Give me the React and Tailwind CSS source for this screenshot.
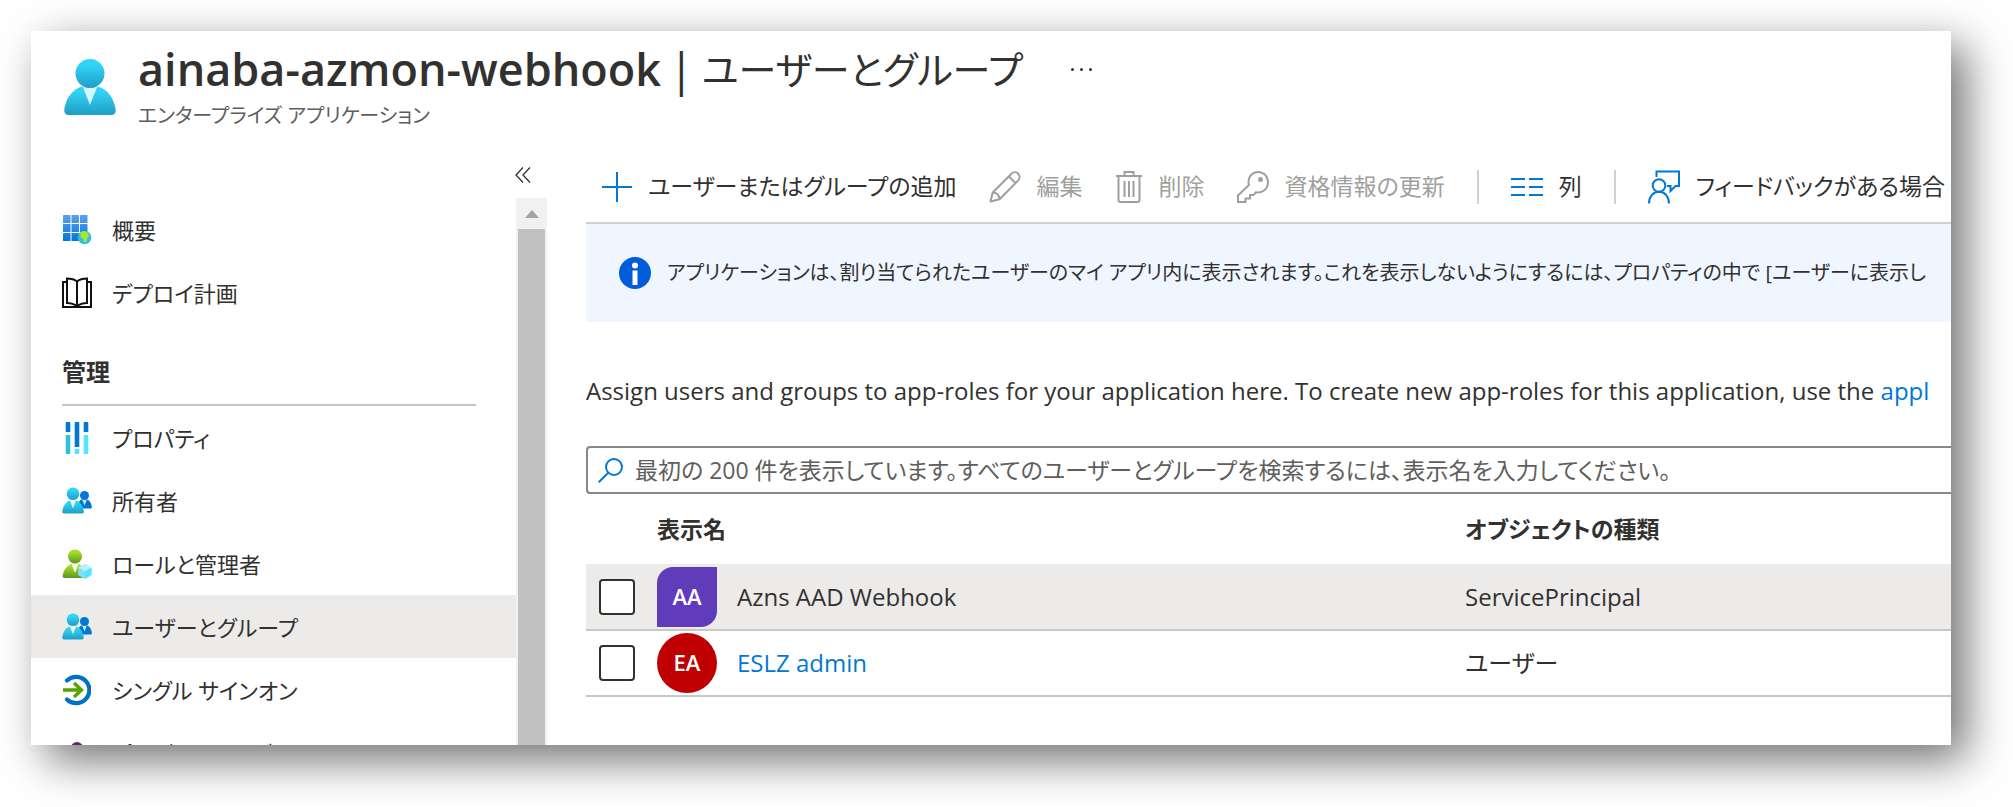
import React from "react";

function PersonIcon({ className }) {
  return (
    <svg viewBox="0 0 52 56" className={className} aria-hidden="true">
      <defs>
        <linearGradient id="person" x1="0" y1="0" x2="0" y2="1">
          <stop offset="0.2" stopColor="#32d4f5" />
          <stop offset="1" stopColor="#1f9dc6" />
        </linearGradient>
      </defs>
      <path d="M47.500 56a4.300 4.300 0 0 0 4.200-5C50 38 42 26.500 26 26.500S2 38 .3 51a4.300 4.300 0 0 0 4.200 5z" fill="url(#person)" />
      <path d="M18.500 27L26 46l7.500-19c-4 2.500-11 2.500-15 0z" fill="#fff" opacity=".8" />
      <circle cx="26" cy="14.500" r="14.500" fill="url(#person)" />
    </svg>
  );
}

function OverviewIcon() {
  return (
    <svg viewBox="0 0 28 30" className="h-[30px] w-7" aria-hidden="true">
      <defs>
        <linearGradient id="tiles" x1="0" y1="0" x2="0" y2="26" gradientUnits="userSpaceOnUse">
          <stop offset="0" stopColor="#5ea0ef" />
          <stop offset="1" stopColor="#0078d4" />
        </linearGradient>
      </defs>
      <g fill="url(#tiles)">
        {[0, 8.500, 17].map((x) =>
          [0, 9, 18].map((y) => <rect key={x + "-" + y} x={x} y={y} width="7.500" height="8" rx=".6" />)
        )}
      </g>
      <circle cx="21.500" cy="22.500" r="6.800" fill="#32bedd" />
      <path d="M17.500 17.500c2-1.500 5-1.800 7 .2l1.500 3-1.500 2-1 3.500-2.500 1.500-.5-3.500-3-2.500z" fill="#a7e82e" />
    </svg>
  );
}

function BookIcon() {
  return (
    <svg viewBox="0 0 30 32" className="h-8 w-[30px]" fill="none" stroke="#111" strokeWidth="2" aria-hidden="true">
      <path d="M5 5H1v25h28V5h-4" />
      <path d="M15 4.500C12 2 9 1.500 5 1.500V26c4 0 7 .8 10 3.500 3-2.700 6-3.500 10-3.500V1.500c-4 0-7 .5-10 3zM15 4.500v25" />
    </svg>
  );
}

function PropertiesIcon() {
  return (
    <svg viewBox="0 0 24 32" className="h-8 w-6" aria-hidden="true">
      <g fill="#0078d4">
        <path d="M1.500 0h3a.8.8 0 0 1 .8.800V10H.7V.8A.8.8 0 0 1 1.500 0zM10.500 0h3a.8.8 0 0 1 .8.800V25H9.700V.8a.8.800 0 0 1 .8-.8zM19.500 0h3a.8.8 0 0 1 .8.800V10h-4.600V.8a.8.800 0 0 1 .8-.8z" />
      </g>
      <path d="M.7 13h4.600v18a1 1 0 0 1-1 1H1.700a1 1 0 0 1-1-1z" fill="#32bedd" />
      <path d="M9.700 27h4.600v4a1 1 0 0 1-1 1h-2.600a1 1 0 0 1-1-1zM18.700 13h4.600v18a1 1 0 0 1-1 1h-2.600a1 1 0 0 1-1-1z" fill="#50e6ff" />
    </svg>
  );
}

function UsersIcon() {
  return (
    <svg viewBox="0 0 30 27" className="h-[27px] w-[30px]" aria-hidden="true">
      <path d="M28.500 21.500c1 0 1.500-.7 1.400-1.500-.5-4.500-3-8-7.400-8s-7 3.500-7.400 8l4 1.500z" fill="#0078d4" />
      <path d="M20 12l2.500 6.500L25 12z" fill="#fff" opacity=".85" />
      <circle cx="22.500" cy="8.500" r="4.500" fill="#0078d4" />
      <path d="M20 26.500c1.200 0 1.900-.9 1.800-1.900C21 18.500 17.500 13 11 13S1 18.500.2 24.600c-.1 1 .6 1.900 1.800 1.900z" fill="url(#person)" />
      <path d="M7.700 13l3.300 8.500 3.300-8.500z" fill="#fff" opacity=".85" />
      <circle cx="11" cy="6.800" r="6.300" fill="url(#person)" />
    </svg>
  );
}

function RolesIcon() {
  return (
    <svg viewBox="0 0 30 30" className="h-[30px] w-[30px]" aria-hidden="true">
      <defs>
        <linearGradient id="role" x1="0" y1="0" x2="0" y2="1">
          <stop offset="0.200" stopColor="#a4dc26" />
          <stop offset="1" stopColor="#5e9624" />
        </linearGradient>
      </defs>
      <path d="M23 29c1.200 0 2-1 1.900-2C24 20.500 20 14.500 13 14.500S1.500 20.500.6 27c-.1 1 .700 2 1.900 2z" fill="url(#role)" />
      <path d="M9.300 14.500L13 24l3.700-9.500z" fill="#fff" opacity=".9" />
      <circle cx="13" cy="7.500" r="7" fill="url(#role)" />
      <path d="M23 15l6.500 3.500v7.500L23 30l-6.500-4v-7.500z" fill="#9cebff" />
      <path d="M23 22l6.500-3.500v7.500L23 30z" fill="#50e6ff" />
      <path d="M16.500 18.500L23 22v8l-6.500-4z" fill="#7fdff5" />
      <path d="M23 22l-6.500-3.500L23 15l6.500 3.500z" fill="#b5f1ff" />
    </svg>
  );
}

function SignOnIcon() {
  return (
    <svg viewBox="0 0 28 32" className="h-8 w-7" fill="none" aria-hidden="true">
      <path d="M4 6.500A13.200 13.200 0 1 1 4 25.500" stroke="#0072c6" strokeWidth="4.200" strokeLinecap="round" />
      <path d="M0 16h18M11 9l7.500 7-7.500 7" stroke="#57a300" strokeWidth="3.400" />
    </svg>
  );
}

function ProvisionIcon() {
  return (
    <svg viewBox="0 0 28 32" className="h-8 w-7" fill="none" stroke="#68217a" strokeWidth="3" aria-hidden="true">
      <circle cx="14" cy="11" r="4.500" />
      <path d="M3 31c0-8 5-12 11-12s11 4 11 12" />
    </svg>
  );
}

const overviewItems = [
  { label: "概要", icon: <OverviewIcon /> },
  { label: "デプロイ計画", icon: <BookIcon /> },
];

const manageItems = [
  { label: "プロパティ", icon: <PropertiesIcon /> },
  { label: "所有者", icon: <UsersIcon /> },
  { label: "ロールと管理者", icon: <RolesIcon /> },
  { label: "ユーザーとグループ", icon: <UsersIcon />, current: true },
  { label: "シングル サインオン", icon: <SignOnIcon /> },
  { label: "プロビジョニング", icon: <ProvisionIcon /> },
];

function NavList({ items }) {
  return (
    <ul>
      {items.map((item) => (
        <li key={item.label}>
          <a
            href="#"
            aria-current={item.current ? "page" : undefined}
            className={
              item.current
                ? "flex h-[63px] items-center gap-5 bg-[#edebe9] pl-[31px]"
                : "flex h-[63px] items-center gap-5 pl-[31px]"
            }
          >
            <span className="flex w-[30px] shrink-0 justify-center">{item.icon}</span>
            <span className="text-[22px] leading-8 whitespace-nowrap">{item.label}</span>
          </a>
        </li>
      ))}
    </ul>
  );
}

function Sidebar() {
  return (
    <nav aria-label="メニュー" className="flex w-[516px] shrink-0 flex-col">
      <div className="flex h-[47px] items-center justify-end pr-4">
        <button type="button" aria-label="折りたたむ">
          <svg viewBox="0 0 16 16" className="size-4" fill="none" stroke="#323130" strokeWidth="1.300" aria-hidden="true">
            <path d="M8 .5L1 8l7 7.500M15 .5L8 8l7 7.500" />
          </svg>
        </button>
      </div>
      <div className="flex min-h-0 flex-1">
        <div className="min-w-0 flex-1 overflow-hidden">
          <NavList items={overviewItems} />
          <div className="mr-10 ml-[31px] flex h-[82px] items-center border-b-2 border-[#c8c6c4] pt-4">
            <h2 className="text-2xl font-semibold">管理</h2>
          </div>
          <NavList items={manageItems} />
        </div>
        <div className="flex w-[31px] flex-col bg-[#f1f1f1]">
          <div className="flex h-[31px] items-center justify-center">
            <svg viewBox="0 0 14 8" className="h-2 w-3.5" aria-hidden="true">
              <path d="M7 0l7 8H0z" fill="#a3a3a3" />
            </svg>
          </div>
          <div className="mx-0.5 flex-1 bg-[#c1c1c1]" />
        </div>
      </div>
    </nav>
  );
}

function Command({ icon, label, disabled }) {
  return (
    <button
      type="button"
      disabled={disabled}
      className="flex items-center gap-4 text-[23px] whitespace-nowrap disabled:text-[#a19f9d]"
    >
      {icon}
      {label}
    </button>
  );
}

function Toolbar() {
  return (
    <div className="flex h-[73px] shrink-0 items-center gap-8 overflow-hidden border-b-2 border-[#d2d0ce] pl-4">
      <Command
        label="ユーザーまたはグループの追加"
        icon={
          <svg viewBox="0 0 30 30" className="size-[30px]" stroke="#0078d4" strokeWidth="2" aria-hidden="true">
            <path d="M15 0v30M0 15h30" />
          </svg>
        }
      />
      <Command
        disabled
        label="編集"
        icon={
          <svg viewBox="0 0 32 32" className="size-8" fill="none" stroke="#a19f9d" strokeWidth="2" strokeLinejoin="round" aria-hidden="true">
            <path d="M1.500 30.500l2.200-9L22.500 2.700a4.700 4.700 0 0 1 6.700 6.700L10.500 28.200zM20 5.500l6.500 6.500M3.700 21.500c3.500-.2 6.700 2.500 6.800 6.700" />
          </svg>
        }
      />
      <Command
        disabled
        label="削除"
        icon={
          <svg viewBox="0 0 28 32" className="h-8 w-7" fill="none" stroke="#a19f9d" strokeWidth="2" aria-hidden="true">
            <path d="M1 5h26M9.500 5V1h9v4M3.500 5v24a2 2 0 0 0 2 2h17a2 2 0 0 0 2-2V5M9.500 10v16M14 10v16M18.500 10v16" />
          </svg>
        }
      />
      <Command
        disabled
        label="資格情報の更新"
        icon={
          <svg viewBox="0 0 32 32" className="size-8" fill="none" stroke="#a19f9d" strokeWidth="2" aria-hidden="true">
            <path d="M1 31v-6.500L12 14C10 7 14.500 1 21.500 1A9.700 9.700 0 0 1 31 11c0 7-5.500 11.500-12 10.200L16.500 24H13v3.500H8.500V31z" />
            <circle cx="23.500" cy="8.500" r="1.500" fill="#a19f9d" />
          </svg>
        }
      />
      <div className="h-[34px] w-0.5 shrink-0 bg-[#d2d0ce]" />
      <Command
        label="列"
        icon={
          <svg viewBox="0 0 32 20" className="h-5 w-8" stroke="#0078d4" strokeWidth="2" aria-hidden="true">
            <path d="M0 2h14M18 2h14M0 10h14M18 10h14M0 18h14M18 18h14" />
          </svg>
        }
      />
      <div className="h-[34px] w-0.5 shrink-0 bg-[#d2d0ce]" />
      <Command
        label="フィードバックがある場合"
        icon={
          <svg viewBox="0 0 32 34" className="h-[34px] w-8" fill="none" stroke="#0078d4" strokeWidth="2" aria-hidden="true">
            <path d="M8.500 7V1.500H31V16h-3.500l-5 5v-5H19" />
            <circle cx="11" cy="15.500" r="6.300" />
            <path d="M1 33.500c0-7 4-11.700 10-11.700s10 4.700 10 11.700" />
          </svg>
        }
      />
    </div>
  );
}

const rows = [
  { initials: "AA", name: "Azns AAD Webhook", type: "ServicePrincipal", app: true },
  { initials: "EA", name: "ESLZ admin", type: "ユーザー" },
];

function AssignmentTable() {
  return (
    <table className="w-full table-fixed text-left text-2xl">
      <colgroup>
        <col className="w-[71px]" />
        <col className="w-[808px]" />
        <col />
      </colgroup>
      <thead>
        <tr className="h-[70px] text-[23px]">
          <td />
          <th scope="col" className="font-semibold">表示名</th>
          <th scope="col" className="font-semibold">オブジェクトの種類</th>
        </tr>
      </thead>
      <tbody>
        {rows.map((row) => (
          <tr
            key={row.name}
            className={
              row.app
                ? "h-[66px] border-b-2 border-[#c8c8c8] bg-[#edebe9]"
                : "h-[66px] border-b-2 border-[#c8c8c8]"
            }
          >
            <td className="pl-[13px]">
              <input
                type="checkbox"
                aria-label={row.name}
                className="block size-9 appearance-none rounded-sm border-2 border-[#323130] bg-white"
              />
            </td>
            <td>
              <div className="flex items-center gap-5">
                <span
                  className={
                    row.app
                      ? "flex size-[60px] items-center justify-center rounded-tl-2xl rounded-br-2xl bg-[#603cba] text-[22px] font-semibold text-white"
                      : "flex size-[60px] items-center justify-center rounded-full bg-[#c00000] text-[22px] font-semibold text-white"
                  }
                >
                  {row.initials}
                </span>
                {row.app ? <span>{row.name}</span> : <a href="#" className="text-[#0078d4]">{row.name}</a>}
              </div>
            </td>
            <td>{row.type}</td>
          </tr>
        ))}
      </tbody>
    </table>
  );
}

export default function App() {
  return (
    <div className="h-screen bg-white pt-[31px] pr-[62px] pb-[62px] pl-[31px] font-['Open_Sans','Noto_Sans_CJK_JP',sans-serif] text-[#323130] [font-feature-settings:'palt']">
      <div className="flex h-full flex-col overflow-hidden bg-white shadow-[15px_15px_42px_rgba(0,0,0,0.56)]">
        <header className="flex h-[120px] shrink-0 gap-[22px] pt-2 pl-[33px]">
          <PersonIcon className="mt-5 h-14 w-[52px] shrink-0" />
          <div className="min-w-0 flex-1">
            <div className="flex items-center gap-12">
              <h1 className="flex items-center gap-2 text-[45px] leading-[60px] whitespace-nowrap">
                <span className="font-semibold">ainaba-azmon-webhook</span>
                <span>|</span>
                <span className="text-[38px]">ユーザーとグループ</span>
              </h1>
              <button type="button" aria-label="その他" className="flex gap-1.5">
                <span className="size-[3px] rounded-full bg-[#323130]" />
                <span className="size-[3px] rounded-full bg-[#323130]" />
                <span className="size-[3px] rounded-full bg-[#323130]" />
              </button>
            </div>
            <p className="text-xl leading-[34px] text-[#605e5c]">エンタープライズ アプリケーション</p>
          </div>
        </header>
        <div className="flex min-h-0 flex-1">
          <Sidebar />
          <main className="ml-[39px] flex min-w-0 flex-1 flex-col overflow-hidden">
            <Toolbar />
            <div className="flex h-[98px] shrink-0 items-center gap-4 overflow-hidden rounded-bl bg-[#eff6ff] pl-[33px]">
              <svg viewBox="0 0 32 32" className="size-8 shrink-0" aria-hidden="true">
                <circle cx="16" cy="16" r="16" fill="#015cda" />
                <circle cx="16" cy="8.500" r="3" fill="#fff" />
                <path d="M13.500 13.500h5V28h-5z" fill="#fff" />
              </svg>
              <p className="text-xl whitespace-nowrap">
                アプリケーションは、割り当てられたユーザーのマイ アプリ内に表示されます。これを表示しないようにするには、プロパティの中で [ユーザーに表示し
              </p>
            </div>
            <p className="mt-[53px] text-2xl whitespace-nowrap">
              Assign users and groups to app-roles for your application here. To create new app-roles for this application, use the{" "}
              <a href="#" className="text-[#0078d4]">appl</a>
            </p>
            <label className="mt-[39px] flex h-12 shrink-0 items-center gap-3 rounded-l border-2 border-r-0 border-[#8a8886] pl-2.5">
              <svg viewBox="0 0 25 25" className="size-[25px] shrink-0" fill="none" stroke="#0078d4" strokeWidth="2" aria-hidden="true">
                <circle cx="16" cy="9" r="8" />
                <path d="M10.500 14.500L.7 24.300" />
              </svg>
              <input
                type="text"
                aria-label="検索"
                placeholder="最初の 200 件を表示しています。すべてのユーザーとグループを検索するには、表示名を入力してください。"
                className="min-w-0 flex-1 bg-transparent text-[23px] outline-none placeholder:text-[#605e5c]"
              />
            </label>
            <AssignmentTable />
          </main>
        </div>
      </div>
    </div>
  );
}
